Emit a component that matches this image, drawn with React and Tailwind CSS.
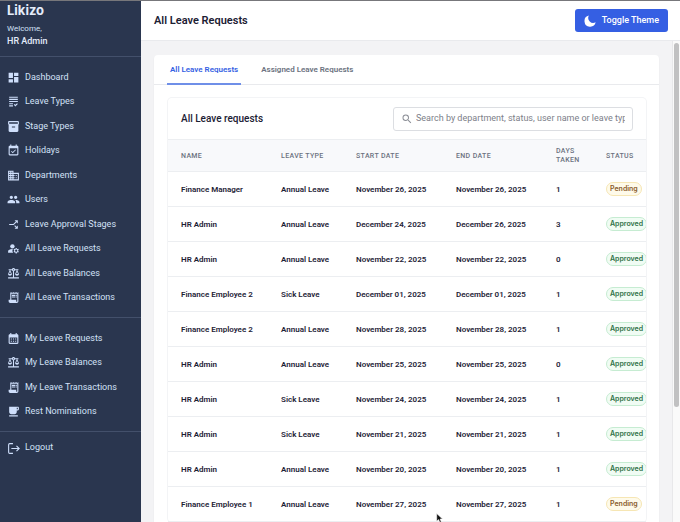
import { useState } from "react";
import {
  MdDashboard,
  MdGrading,
  MdInventory2,
  MdEventAvailable,
  MdBusiness,
  MdPeople,
  MdCallSplit,
  MdManageAccounts,
  MdBalance,
  MdReceiptLong,
  MdCalendarMonth,
  MdFreeBreakfast,
  MdSearch,
} from "react-icons/md";
import clsx from "clsx";

const adminLinks = [
  { label: "Dashboard", icon: MdDashboard },
  { label: "Leave Types", icon: MdGrading },
  { label: "Stage Types", icon: MdInventory2 },
  { label: "Holidays", icon: MdEventAvailable },
  { label: "Departments", icon: MdBusiness },
  { label: "Users", icon: MdPeople },
  { label: "Leave Approval Stages", icon: MdCallSplit, iconClass: "rotate-90" },
  { label: "All Leave Requests", icon: MdManageAccounts },
  { label: "All Leave Balances", icon: MdBalance },
  { label: "All Leave Transactions", icon: MdReceiptLong },
];

const myLinks = [
  { label: "My Leave Requests", icon: MdCalendarMonth },
  { label: "My Leave Balances", icon: MdBalance },
  { label: "My Leave Transactions", icon: MdReceiptLong },
  { label: "Rest Nominations", icon: MdFreeBreakfast },
];

const tabs = ["All Leave Requests", "Assigned Leave Requests"];

const requests = [
  { id: 1, name: "Finance Manager", type: "Annual Leave", start: "November 26, 2025", end: "November 26, 2025", days: 1, status: "Pending" },
  { id: 2, name: "HR Admin", type: "Annual Leave", start: "December 24, 2025", end: "December 26, 2025", days: 3, status: "Approved" },
  { id: 3, name: "HR Admin", type: "Annual Leave", start: "November 22, 2025", end: "November 22, 2025", days: 0, status: "Approved" },
  { id: 4, name: "Finance Employee 2", type: "Sick Leave", start: "December 01, 2025", end: "December 01, 2025", days: 1, status: "Approved" },
  { id: 5, name: "Finance Employee 2", type: "Annual Leave", start: "November 28, 2025", end: "November 28, 2025", days: 1, status: "Approved" },
  { id: 6, name: "HR Admin", type: "Annual Leave", start: "November 25, 2025", end: "November 25, 2025", days: 0, status: "Approved" },
  { id: 7, name: "HR Admin", type: "Sick Leave", start: "November 24, 2025", end: "November 24, 2025", days: 1, status: "Approved" },
  { id: 8, name: "HR Admin", type: "Sick Leave", start: "November 21, 2025", end: "November 21, 2025", days: 1, status: "Approved" },
  { id: 9, name: "HR Admin", type: "Annual Leave", start: "November 20, 2025", end: "November 20, 2025", days: 1, status: "Approved" },
  { id: 10, name: "Finance Employee 1", type: "Annual Leave", start: "November 27, 2025", end: "November 27, 2025", days: 1, status: "Pending" },
];

function NavItem({ label, icon: Icon, iconClass }) {
  return (
    <li className="flex flex-1 items-center">
      <a href="#" className="flex items-center gap-[5px] whitespace-nowrap">
        <Icon className={clsx("size-[13px] shrink-0 text-[#cfdffb]", iconClass)} />
        {label}
      </a>
    </li>
  );
}

function Sidebar() {
  return (
    <aside className="w-[141px] shrink-0 bg-[#2a364f] text-[9px] text-[#d3e1f7]">
      <div className="h-[55px] px-[7px] pt-px">
        <h2 className="font-[Inter,sans-serif] text-[13px] leading-4 font-bold text-[#e4ecfa]">Likizo</h2>
        <p className="mt-[5px] text-[8px] leading-3">Welcome,</p>
        <p className="text-[9px] leading-3 font-medium text-[#e4ecfa]">HR Admin</p>
      </div>
      <nav>
        <ul className="flex h-[261px] flex-col border-t border-[#43506b] px-[7px] pt-2 pb-[7px]">
          {adminLinks.map((link) => (
            <NavItem key={link.label} {...link} />
          ))}
        </ul>
        <ul className="flex h-[114px] flex-col border-t border-[#43506b] px-[7px] pt-2 pb-[7px]">
          {myLinks.map((link) => (
            <NavItem key={link.label} {...link} />
          ))}
        </ul>
      </nav>
      <div className="border-t border-[#43506b] px-[7px] py-1">
        <button className="flex h-6 items-center gap-[5px]">
          <svg
            viewBox="0 0 24 24"
            className="size-[13px] text-[#cfdffb]"
            fill="none"
            stroke="currentColor"
            strokeWidth="2"
          >
            <path d="M11 3H5a2 2 0 0 0-2 2v14a2 2 0 0 0 2 2h6M8 12h14M17.5 7l5 5-5 5" />
          </svg>
          Logout
        </button>
      </div>
    </aside>
  );
}

function StatusBadge({ status }) {
  return (
    <span
      className={clsx(
        "inline-flex h-[14px] items-center rounded-full border px-[3px] font-[Inter,sans-serif] text-[7px] font-semibold",
        status === "Pending"
          ? "border-[#f6e6b4] bg-[#fefaea] text-[#8a5a2b]"
          : "border-[#c6ecd2] bg-[#f0fcf4] text-[#2f7147]"
      )}
    >
      {status}
    </span>
  );
}

function RequestsTable() {
  return (
    <div className="overflow-hidden">
      <table className="w-full min-w-[504px] table-fixed text-left whitespace-nowrap">
        <thead className="bg-[#f8f9fb] text-[7px] leading-[9px] tracking-wider text-[#6b7280] uppercase">
          <tr className="h-8 border-y border-[#eceef1]">
            <th className="w-[100px] pt-px pl-[13px] font-medium">Name</th>
            <th className="w-[75px] pt-px pl-[13px] font-medium">Leave Type</th>
            <th className="w-[100px] pt-px pl-[13px] font-medium">Start Date</th>
            <th className="w-[100px] pt-px pl-[13px] font-medium">End Date</th>
            <th className="w-[50px] pt-px pl-[13px] font-medium whitespace-normal">Days Taken</th>
            <th className="w-[79px] pt-px pl-[13px] font-medium">Status</th>
          </tr>
        </thead>
        <tbody className="text-[8px] font-semibold text-[#1d2236]">
          {requests.map((request) => (
            <tr key={request.id} className="h-[35px] border-b border-[#eceef1]">
              <td className="pt-px pl-[13px]">{request.name}</td>
              <td className="pt-px pl-[13px]">{request.type}</td>
              <td className="pt-px pl-[13px]">{request.start}</td>
              <td className="pt-px pl-[13px]">{request.end}</td>
              <td className="pt-px pl-[13px]">{request.days}</td>
              <td className="pl-[13px]">
                <StatusBadge status={request.status} />
              </td>
            </tr>
          ))}
        </tbody>
      </table>
    </div>
  );
}

function Header() {
  return (
    <header className="flex h-10 shrink-0 items-center justify-between border-b border-[#e9eaed] bg-white pr-3 pl-[13px]">
      <h1 className="pt-px text-[11px] font-semibold text-[#1b2033]">All Leave Requests</h1>
      <button className="flex h-[23px] items-center gap-[6px] rounded-[3px] bg-[#355fe3] px-[9px] text-[9px] font-medium text-white">
        <svg viewBox="2 2 17 17" className="size-3" fill="currentColor">
          <path d="M9 2.7a8 8 0 1 0 9.5 9.6A7 7 0 0 1 9 2.7z" />
        </svg>
        Toggle Theme
      </button>
    </header>
  );
}

export default function App() {
  const [activeTab, setActiveTab] = useState(tabs[0]);
  const [search, setSearch] = useState("");

  return (
    <div className="flex h-screen overflow-hidden border-t border-[#77777b] font-[Roboto,sans-serif] antialiased">
      <Sidebar />
      <div className="flex min-w-0 flex-1 flex-col">
        <Header />
        <div className="flex min-h-0 flex-1 bg-[#f3f3f5]">
          <main className="min-w-0 flex-1 overflow-hidden px-[13px] pt-[14px]">
            <div className="rounded-[4px] bg-white pb-3 shadow-xs">
              {/* Tabs */}
              <div className="flex h-[30px] gap-[17px] border-b border-[#e9eaed] px-[13px]">
                {tabs.map((tab) => (
                  <button
                    key={tab}
                    onClick={() => setActiveTab(tab)}
                    className={clsx(
                      "-mb-px border-b-2 px-[3px] pt-px text-[8px] font-semibold",
                      tab === activeTab
                        ? "border-[#6f8fe8] text-[#355fe3]"
                        : "border-transparent text-[#6b7280]"
                    )}
                  >
                    {tab}
                  </button>
                ))}
              </div>

              <section className="mt-[13px] mr-[13px] ml-[14px] rounded-[4px] ring-1 ring-[#f3f4f6]">
                <div className="flex h-[41px] items-center justify-between px-[13px]">
                  <h2 className="text-[10px] font-medium text-[#1b2033]">All Leave requests</h2>
                  <label className="flex h-6 w-60 items-center gap-[3px] rounded-[3px] border border-[#dcdee2] px-[7px]">
                    <MdSearch className="size-3 shrink-0 text-[#8b8e96]" />
                    <input
                      type="text"
                      value={search}
                      onChange={(e) => setSearch(e.target.value)}
                      aria-label="Search leave requests"
                      placeholder="Search by department, status, user name or leave type"
                      className="min-w-0 flex-1 pt-px text-[9px] outline-none placeholder:text-[#7d8089]"
                    />
                  </label>
                </div>
                <RequestsTable />
              </section>
            </div>
          </main>

          {/* Scrollbar */}
          <div className="w-2 shrink-0 border-l border-[#e8e8ea] bg-[#fafafa] px-px pt-[2px]">
            <div className="h-[76%] rounded-full bg-[#c1c1c2]" />
          </div>
        </div>
      </div>

      {/* Mouse pointer */}
      <svg viewBox="0 0 12 18" className="absolute top-[513px] left-[436px] h-[10px] w-[7px]">
        <path d="M1 1v14l3.4-3.2L6.6 17l2.6-1.1L7 10.8h4.4z" fill="#111" stroke="#fff" />
      </svg>
    </div>
  );
}
